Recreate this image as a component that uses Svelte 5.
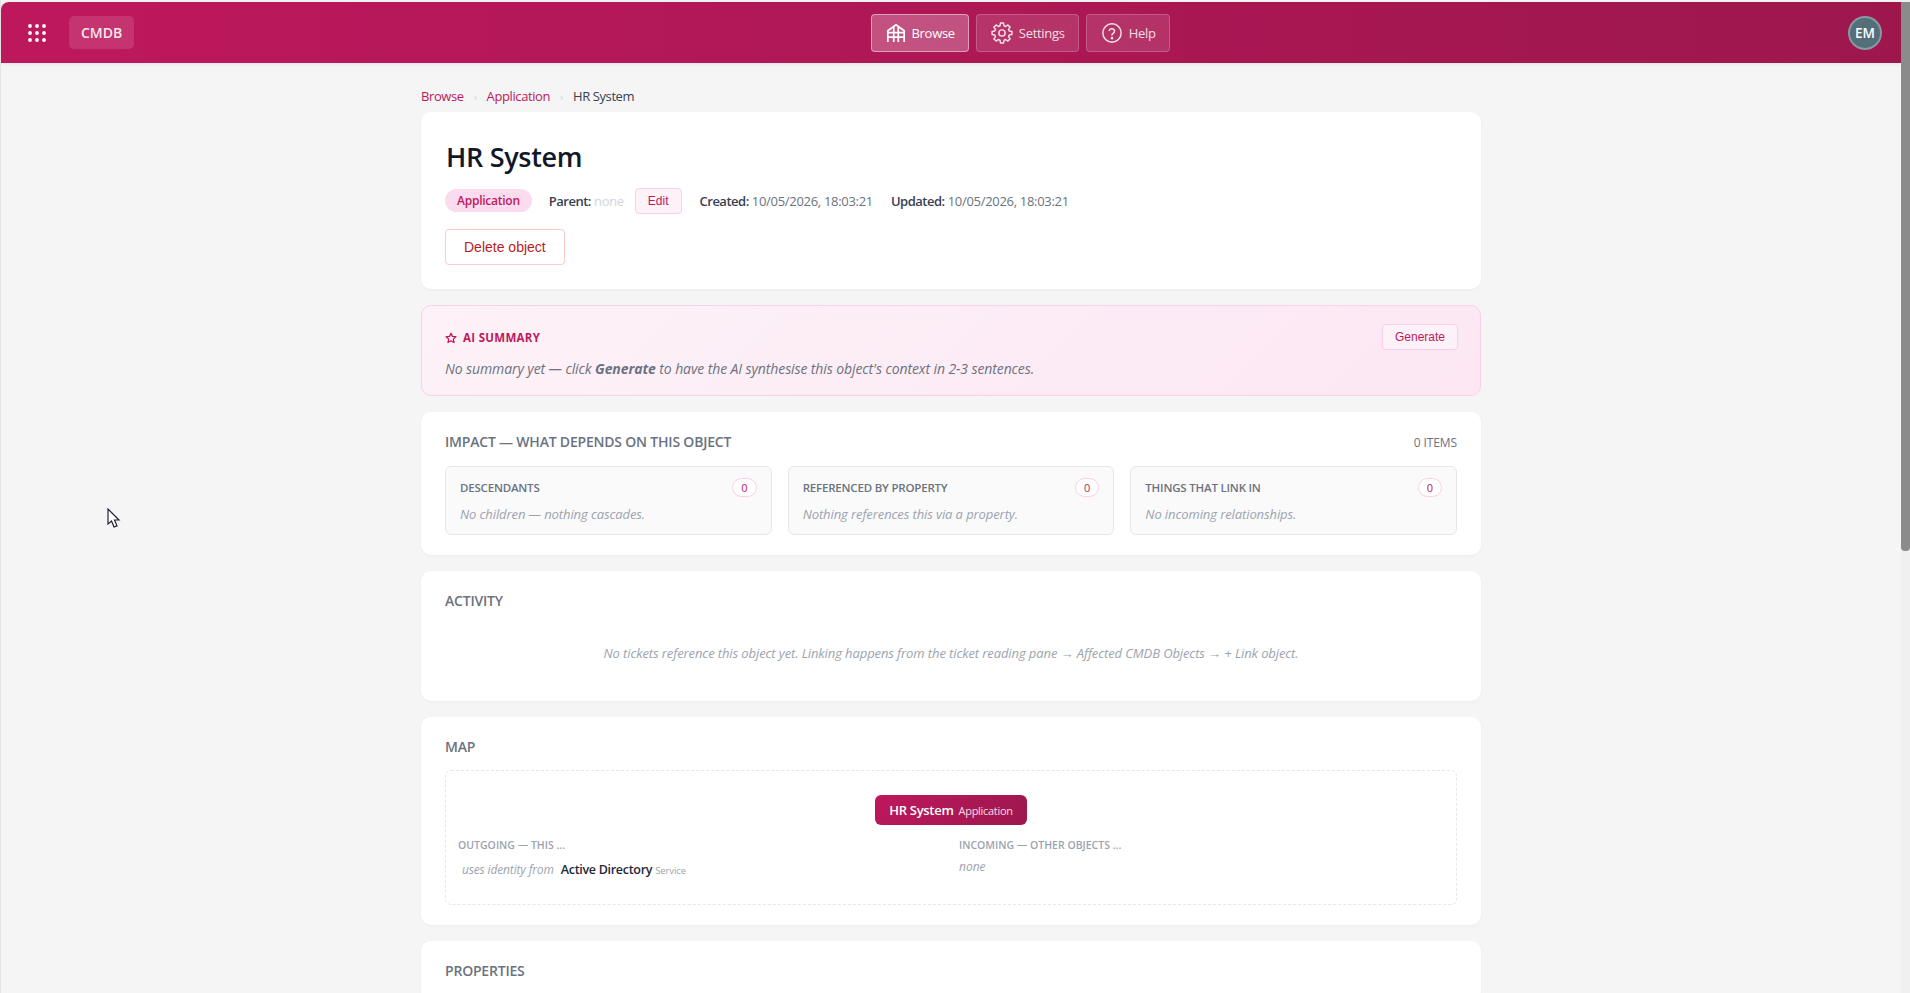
<script lang="ts">
	const navItems = [
		{ label: 'Browse', icon: 'browse', active: true },
		{ label: 'Settings', icon: 'settings', active: false },
		{ label: 'Help', icon: 'help', active: false }
	];

	const impactGroups = [
		{ title: 'Descendants', empty: 'No children — nothing cascades.' },
		{ title: 'Referenced by property', empty: 'Nothing references this via a property.' },
		{ title: 'Things that link in', empty: 'No incoming relationships.' }
	];
</script>

<div class="window">
	<div class="page">
		<header class="topbar">
			<div class="topbar-left">
				<button type="button" class="launcher" aria-label="Apps">
					<svg width="18" height="18" viewBox="0 0 18 18" fill="#fff">
						{#each [2, 9, 16] as cy}
							{#each [2, 9, 16] as cx}
								<circle {cx} {cy} r="1.9" />
							{/each}
						{/each}
					</svg>
				</button>
				<span class="app-name">CMDB</span>
			</div>
			<nav class="topnav">
				{#each navItems as item}
					<button type="button" class="nav-btn" class:active={item.active}>
						{#if item.icon === 'browse'}
							<svg width="20" height="20" viewBox="0 0 22 22" fill="none" stroke="currentColor" stroke-width="1.9">
								<path d="M2 21V8.5L11 2l9 6.5V21" />
								<path d="M2 10.5h18M2 15.5h18M8.5 4v17M13.5 4v17" />
							</svg>
						{:else if item.icon === 'settings'}
							<svg width="22" height="22" viewBox="0 0 24 24" fill="none" stroke="currentColor" stroke-width="1.6" stroke-linejoin="round">
								<path d="M10.3 2.5h3.4l.5 2.9 1.8.8 2.4-1.7 2.4 2.4-1.7 2.4.8 1.8 2.9.5v3.4l-2.9.5-.8 1.8 1.7 2.4-2.4 2.4-2.4-1.7-1.8.8-.5 2.9h-3.4l-.5-2.9-1.8-.8-2.4 1.7-2.4-2.4 1.7-2.4-.8-1.8-2.9-.5v-3.4l2.9-.5.8-1.8-1.7-2.4 2.4-2.4 2.4 1.7 1.8-.8z" transform="translate(0 -1.3)" />
								<circle cx="12" cy="12" r="3.4" />
							</svg>
						{:else}
							<svg width="22" height="22" viewBox="0 0 24 24" fill="none" stroke="currentColor" stroke-width="1.6" stroke-linecap="round">
								<circle cx="12" cy="12" r="10" />
								<path d="M9 9.2a3 3 0 0 1 5.8 1c0 2-2.8 2.4-2.8 4" />
								<circle cx="12" cy="17.6" r="0.6" fill="currentColor" />
							</svg>
						{/if}
						<span>{item.label}</span>
					</button>
				{/each}
			</nav>
			<div class="topbar-right">
				<span class="avatar">EM</span>
			</div>
		</header>

		<main class="content">
			<div class="breadcrumb">
				<a href="#browse">Browse</a>
				<span class="sep">›</span>
				<a href="#application">Application</a>
				<span class="sep">›</span>
				<span class="current">HR System</span>
			</div>

			<section class="card head-card">
				<h1>HR System</h1>
				<div class="meta">
					<span class="type-pill">Application</span>
					<span class="meta-item parent"><b>Parent:</b> <span class="none">none</span></span>
					<button type="button" class="edit-btn">Edit</button>
					<span class="meta-item"><b>Created:</b> 10/05/2026, 18:03:21</span>
					<span class="meta-item"><b>Updated:</b> 10/05/2026, 18:03:21</span>
				</div>
				<button type="button" class="delete-btn">Delete object</button>
			</section>

			<section class="summary">
				<div class="summary-top">
					<div class="summary-title">
						<svg width="12" height="12" viewBox="0 0 24 24" fill="none" stroke="currentColor" stroke-width="2.6" stroke-linejoin="round">
							<path d="M12 2.5l2.9 6.2 6.8.8-5 4.7 1.3 6.8-6-3.4-6 3.4 1.3-6.8-5-4.7 6.8-.8z" />
						</svg>
						AI Summary
					</div>
					<button type="button" class="generate-btn">Generate</button>
				</div>
				<p>No summary yet — click <b>Generate</b> to have the AI synthesise this object's context in 2-3 sentences.</p>
			</section>

			<section class="card">
				<div class="card-head">
					<h2>Impact — what depends on this object</h2>
					<span class="count">0 items</span>
				</div>
				<div class="impact-grid">
					{#each impactGroups as group}
						<div class="impact-box">
							<div class="impact-top">
								<span class="impact-title">{group.title}</span>
								<span class="badge">0</span>
							</div>
							<div class="impact-empty">{group.empty}</div>
						</div>
					{/each}
				</div>
			</section>

			<section class="card activity">
				<h2>Activity</h2>
				<p class="activity-empty">No tickets reference this object yet. Linking happens from the ticket reading pane → Affected CMDB Objects → + Link object.</p>
			</section>

			<section class="card">
				<h2>Map</h2>
				<div class="map">
					<div class="map-center">
						<span class="map-node"><b>HR System</b> <span>Application</span></span>
					</div>
					<div class="map-cols">
						<div>
							<div class="map-label">Outgoing — this ...</div>
							<div class="map-row">
								<span class="rel">uses identity from</span>
								<span class="target">Active Directory</span>
								<span class="target-type">Service</span>
							</div>
						</div>
						<div>
							<div class="map-label">Incoming — other objects ...</div>
							<div class="map-none">none</div>
						</div>
					</div>
				</div>
			</section>

			<section class="card properties">
				<h2>Properties</h2>
			</section>
		</main>

		<!-- mouse pointer caught in the screenshot -->
		<svg class="pointer" width="14" height="21" viewBox="0 0 14 21">
			<path d="M1 1v15l3.5-3 2.5 6 3-1.2-2.5-5.8H12z" fill="#fff" stroke="#1f2233" stroke-width="1.2" />
		</svg>
	</div>

	<div class="scrollbar">
		<div class="thumb"></div>
	</div>
</div>

<style>
	:global(body) {
		margin: 0;
		background: #f5f5f5;
	}

	.window {
		display: flex;
		height: 993px;
		overflow: hidden;
		font-family: 'Open Sans', 'Noto Sans', sans-serif;
		letter-spacing: -0.3px;
		color: #1f2937;
		background: #f5f5f5;
	}

	.page {
		position: relative;
		flex: 1;
		min-width: 0;
		overflow: hidden;
		border-left: 1px solid #e4e4e4;
	}

	.scrollbar {
		width: 9px;
		flex: none;
		padding-top: 2px;
		background: #f0f0f0;
	}

	.thumb {
		height: 549px;
		border-radius: 0 0 4px 4px;
		background: #8b8b8b;
	}

	.topbar {
		display: grid;
		grid-template-columns: 850px auto 1fr;
		align-items: center;
		height: 61px;
		margin-top: 2px;
		padding: 0 19px 0 20px;
		background: linear-gradient(90deg, #be185d, #9d174d);
		border-top-left-radius: 8px;
		box-shadow: 0 1px 4px rgba(0, 0, 0, 0.08);
	}

	.topbar-left {
		display: flex;
		align-items: center;
		gap: 16px;
	}

	.launcher {
		display: flex;
		padding: 7px;
		border: none;
		background: none;
	}

	.app-name {
		padding: 7px 12px;
		border-radius: 5px;
		background: rgba(255, 255, 255, 0.12);
		color: rgba(255, 255, 255, 0.9);
		font-size: 14px;
		font-weight: 600;
		letter-spacing: 0;
	}

	.topnav {
		display: flex;
		gap: 7px;
	}

	.nav-btn {
		display: flex;
		align-items: center;
		gap: 6px;
		height: 38px;
		padding: 0 13.5px;
		border: 1px solid rgba(255, 255, 255, 0.2);
		border-radius: 4px;
		background: rgba(255, 255, 255, 0.12);
		color: rgba(255, 255, 255, 0.85);
		font: inherit;
		font-size: 13px;
		letter-spacing: -0.3px;
	}

	.nav-btn.active {
		border-color: rgba(255, 255, 255, 0.45);
		background: rgba(255, 255, 255, 0.25);
		color: #fff;
	}

	.topbar-right {
		display: flex;
		justify-content: flex-end;
	}

	.avatar {
		display: flex;
		align-items: center;
		justify-content: center;
		width: 30px;
		height: 30px;
		border: 2px solid rgba(255, 255, 255, 0.3);
		border-radius: 50%;
		background: #546e7a;
		color: #fff;
		font-size: 13.5px;
		font-weight: 600;
		letter-spacing: 0;
	}

	.content {
		display: flex;
		flex-direction: column;
		gap: 16px;
		width: 1060px;
		margin: 0 auto;
		padding-top: 24px;
	}

	.breadcrumb {
		display: flex;
		align-items: center;
		gap: 10px;
		height: 18px;
		margin-bottom: -9px;
		font-size: 13px;
		letter-spacing: -0.4px;
	}

	.breadcrumb a {
		color: #be185d;
		text-decoration: none;
	}

	.sep {
		color: #d1d5db;
		font-size: 11px;
	}

	.current {
		color: #374151;
	}

	.card {
		padding: 20px 24px;
		border-radius: 10px;
		background: #fff;
		box-shadow: 0 1px 3px rgba(0, 0, 0, 0.04);
	}

	.head-card {
		padding: 24px;
	}

	h1 {
		margin: 1px 0 11px 1px;
		color: #111827;
		font-size: 27px;
		font-weight: 600;
		line-height: 40px;
		letter-spacing: -0.3px;
	}

	.meta {
		display: flex;
		align-items: center;
		height: 25px;
		margin-bottom: 16px;
		font-size: 13px;
		color: #6b7280;
	}

	.meta b {
		color: #374151;
		font-weight: 600;
		letter-spacing: -0.5px;
	}

	.type-pill {
		margin-right: 17px;
		padding: 3px 12px;
		border-radius: 12px;
		background: #fbdcee;
		color: #be185d;
		font-size: 12px;
		font-weight: 600;
		letter-spacing: -0.25px;
	}

	.parent {
		margin-right: 11px;
	}

	.none {
		color: #d1d5db;
	}

	.edit-btn {
		height: 26px;
		margin-right: 18px;
		padding: 0 12px;
		border: 1px solid #fbcfe8;
		border-radius: 4px;
		background: #fdf2f8;
		color: #be185d;
		font: 12px 'Liberation Sans', sans-serif;
		letter-spacing: 0;
	}

	.meta-item + .meta-item {
		margin-left: 18px;
	}

	.delete-btn {
		display: block;
		height: 36px;
		padding: 0 18px;
		border: 1px solid #fecaca;
		border-radius: 4px;
		background: #fff;
		color: #b91c1c;
		font: 14px 'Liberation Sans', sans-serif;
		letter-spacing: 0;
	}

	.summary {
		padding: 18px 23px 17px;
		border: 1px solid #fbcfe8;
		border-radius: 10px;
		background: linear-gradient(135deg, #fdf2f8, #fce7f3);
	}

	.summary-top {
		display: flex;
		align-items: flex-start;
		justify-content: space-between;
		height: 35px;
	}

	.summary-title {
		display: flex;
		align-items: center;
		gap: 6px;
		padding-top: 6px;
		color: #be185d;
		font-size: 11.5px;
		font-weight: 700;
		text-transform: uppercase;
		letter-spacing: 0.3px;
	}

	.generate-btn {
		height: 26px;
		margin-right: -1px;
		padding: 0 12px;
		border: 1px solid #fbcfe8;
		border-radius: 4px;
		background: #fdf2f8;
		color: #be185d;
		font: 12px 'Liberation Sans', sans-serif;
		letter-spacing: 0;
	}

	.summary p {
		margin: 0;
		color: #6b7280;
		font-size: 14px;
		font-style: italic;
		letter-spacing: -0.1px;
	}

	.card-head {
		display: flex;
		align-items: center;
		justify-content: space-between;
	}

	h2 {
		margin: 0;
		color: #6b7280;
		font-size: 14px;
		font-weight: 600;
		line-height: 20px;
		letter-spacing: -0.2px;
		text-transform: uppercase;
	}

	.count {
		color: #6b7280;
		font-size: 12px;
		letter-spacing: -0.1px;
		text-transform: uppercase;
	}

	.impact-grid {
		display: grid;
		grid-template-columns: repeat(3, 1fr);
		gap: 16px;
		margin-top: 14px;
	}

	.impact-box {
		padding: 11px 14px 11px;
		border: 1px solid #e5e7eb;
		border-radius: 6px;
		background: #fafafa;
	}

	.impact-top {
		display: flex;
		align-items: center;
		justify-content: space-between;
	}

	.impact-title {
		color: #6b7280;
		font-size: 11.5px;
		font-weight: 600;
		letter-spacing: -0.2px;
		text-transform: uppercase;
	}

	.badge {
		padding: 1px 8px;
		border: 1px solid #fbcfe8;
		border-radius: 10px;
		background: #fff;
		color: #be185d;
		font-size: 11px;
		letter-spacing: 0;
	}

	.impact-empty {
		margin-top: 8px;
		color: #9ca3af;
		font-size: 13px;
		font-style: italic;
		letter-spacing: -0.1px;
	}

	.activity {
		padding-bottom: 39px;
	}

	.activity-empty {
		margin: 33px 0 0;
		color: #9ca3af;
		font-size: 13px;
		font-style: italic;
		letter-spacing: -0.1px;
		text-align: center;
	}

	.map {
		margin-top: 13px;
		padding: 24px 12px 26px;
		border: 1px dashed #e5e7eb;
		border-radius: 6px;
	}

	.map-center {
		display: flex;
		justify-content: center;
	}

	.map-node {
		padding: 6px 14px;
		border-radius: 6px;
		background: linear-gradient(135deg, #be185d, #9d174d);
		color: #fff;
		font-size: 13px;
	}

	.map-node b {
		font-weight: 600;
	}

	.map-node span {
		margin-left: 2px;
		font-size: 11px;
		opacity: 0.85;
	}

	.map-cols {
		display: grid;
		grid-template-columns: 1fr 1fr;
		gap: 16px;
		margin-top: 13px;
	}

	.map-label {
		color: #9ca3af;
		font-size: 10.5px;
		font-weight: 600;
		letter-spacing: 0;
		text-transform: uppercase;
	}

	.map-row {
		display: flex;
		align-items: baseline;
		margin-top: 9px;
		padding-left: 4px;
	}

	.rel {
		margin-right: 7px;
		color: #9ca3af;
		font-size: 12px;
		font-style: italic;
		letter-spacing: -0.15px;
	}

	.target {
		margin-right: 3px;
		color: #1f2937;
		font-size: 12.5px;
		font-weight: 600;
	}

	.target-type {
		color: #9ca3af;
		font-size: 9.5px;
		letter-spacing: -0.1px;
	}

	.map-none {
		margin-top: 6px;
		color: #9ca3af;
		font-size: 12px;
		font-style: italic;
		letter-spacing: 0;
	}

	.pointer {
		position: absolute;
		left: 106px;
		top: 508px;
	}
</style>
